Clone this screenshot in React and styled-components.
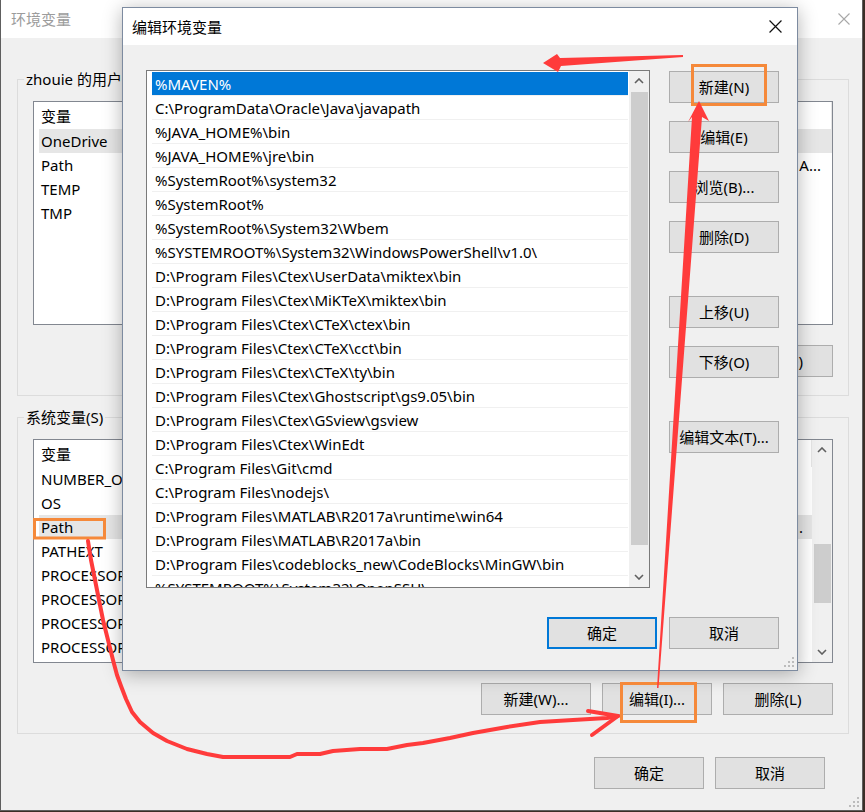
import React from "react";
import styled, { createGlobalStyle } from "styled-components";

const FONT = `"Noto Sans", "Noto Sans CJK SC", sans-serif`;

const GlobalStyle = createGlobalStyle`
  body {
    margin: 0;
    background: #3a2d26;
    font-family: ${FONT};
    font-size: 15px;
    color: #000;
  }
`;

const paths = [
  "%MAVEN%",
  "C:\\ProgramData\\Oracle\\Java\\javapath",
  "%JAVA_HOME%\\bin",
  "%JAVA_HOME%\\jre\\bin",
  "%SystemRoot%\\system32",
  "%SystemRoot%",
  "%SystemRoot%\\System32\\Wbem",
  "%SYSTEMROOT%\\System32\\WindowsPowerShell\\v1.0\\",
  "D:\\Program Files\\Ctex\\UserData\\miktex\\bin",
  "D:\\Program Files\\Ctex\\MiKTeX\\miktex\\bin",
  "D:\\Program Files\\Ctex\\CTeX\\ctex\\bin",
  "D:\\Program Files\\Ctex\\CTeX\\cct\\bin",
  "D:\\Program Files\\Ctex\\CTeX\\ty\\bin",
  "D:\\Program Files\\Ctex\\Ghostscript\\gs9.05\\bin",
  "D:\\Program Files\\Ctex\\GSview\\gsview",
  "D:\\Program Files\\Ctex\\WinEdt",
  "C:\\Program Files\\Git\\cmd",
  "C:\\Program Files\\nodejs\\",
  "D:\\Program Files\\MATLAB\\R2017a\\runtime\\win64",
  "D:\\Program Files\\MATLAB\\R2017a\\bin",
  "D:\\Program Files\\codeblocks_new\\CodeBlocks\\MinGW\\bin",
  "%SYSTEMROOT%\\System32\\OpenSSH\\",
];

// values are mostly hidden behind the edit dialog; only the tails that peek out are kept
const userVars = [
  { name: "OneDrive", value: "", selected: true },
  { name: "Path", value: "A..." },
  { name: "TEMP", value: "" },
  { name: "TMP", value: "" },
];

const systemVars = [
  { name: "NUMBER_OF_PROCESSORS", value: "" },
  { name: "OS", value: "" },
  { name: "Path", value: ".", selected: true },
  { name: "PATHEXT", value: "" },
  { name: "PROCESSOR_ARCHITECTURE", value: "" },
  { name: "PROCESSOR_IDENTIFIER", value: "" },
  { name: "PROCESSOR_LEVEL", value: "" },
  { name: "PROCESSOR_REVISION", value: "" },
];

function CloseIcon({ color, size }) {
  return (
    <svg width={size} height={size} viewBox="0 0 12 12">
      <path d="M0.5 0.5 L11.5 11.5 M11.5 0.5 L0.5 11.5" stroke={color} strokeWidth="1.1" fill="none" />
    </svg>
  );
}

function Chevron({ up }) {
  return (
    <svg width="10" height="6" viewBox="0 0 10 6">
      <polyline
        points={up ? "1,5 5,1 9,5" : "1,1 5,5 9,1"}
        stroke="#606060"
        strokeWidth="1.6"
        fill="none"
      />
    </svg>
  );
}

function Grip() {
  const dots = [
    [8, 0],
    [8, 4],
    [4, 4],
    [8, 8],
    [4, 8],
    [0, 8],
  ];
  return (
    <GripBox>
      <svg width="10" height="10" viewBox="0 0 10 10">
        {dots.map(([x, y]) => (
          <rect key={`${x}-${y}`} x={x} y={y} width="2" height="2" fill="#bcbcbc" />
        ))}
      </svg>
    </GripBox>
  );
}

function ScrollBar({ offset, size }) {
  return (
    <Scroll>
      <ScrollArrow>
        <Chevron up />
      </ScrollArrow>
      <Track>
        <Thumb $offset={offset} $size={size} />
      </Track>
      <ScrollArrow>
        <Chevron />
      </ScrollArrow>
    </Scroll>
  );
}

function VarList({ rows, scroll, valueEnd }) {
  return (
    <ListBox>
      <ListBody>
        <HeaderRow>
          <NameCell>变量</NameCell>
          <HeaderValue>值</HeaderValue>
        </HeaderRow>
        {rows.map((r) => (
          <VarRow key={r.name} $selected={r.selected}>
            <NameCell>{r.name}</NameCell>
            <ValueCell $end={valueEnd}>{r.value}</ValueCell>
          </VarRow>
        ))}
      </ListBody>
      {scroll && <ScrollBar offset={84} size={59} />}
    </ListBox>
  );
}

function Annotations() {
  const curve = [
    [88, 541], [91, 560], [95, 580], [99, 600], [103, 620], [108, 640], [113, 660],
    [117, 675], [121, 686], [126, 699], [132, 712], [140, 722], [153, 733], [167, 741],
    [187, 749], [207, 754], [223, 757], [290, 757], [297, 754], [320, 754], [333, 751],
    [360, 749], [387, 749], [407, 745], [423, 743], [450, 738], [473, 733], [507, 727],
    [540, 722], [573, 720], [607, 718], [618, 716],
  ]
    .map((p) => p.join(","))
    .join(" ");
  return (
    <Overlay width="865" height="812" viewBox="0 0 865 812">
      <g fill="none" stroke="#f5893a" strokeWidth="3">
        <rect x="34.5" y="519.5" width="70" height="18.5" />
        <rect x="692.5" y="65.5" width="73" height="39" />
        <rect x="621.5" y="683.5" width="74" height="38" />
      </g>
      <g fill="#ff3b3b">
        <polygon points="543,63 557,54 560,58 683,55 683,57 561,66 558,72" />
        <polygon points="699,101 709,121 702,117 658.5,688 657,688 692,117 688,122" />
      </g>
      <g fill="none" stroke="#ff3b3b" strokeWidth="4" strokeLinecap="round" strokeLinejoin="round">
        <polyline points={curve} />
        <polyline points="588,711 618,716 592,735" />
      </g>
    </Overlay>
  );
}

export default function App() {
  return (
    <>
      <GlobalStyle />
      <Desktop>
        <OuterWindow>
          <TitleBar>
            <OuterTitle>环境变量</OuterTitle>
            <CloseIcon color="#a8a8a8" size={12} />
          </TitleBar>
          <OuterBody>
            <Group>
              <Legend>zhouie 的用户变量(U)</Legend>
              <VarList rows={userVars} valueEnd={11} />
              <ButtonRow>
                <Button>新建(N)...</Button>
                <Button>编辑(E)...</Button>
                <Button>删除(D)</Button>
              </ButtonRow>
            </Group>
            <Group>
              <Legend>系统变量(S)</Legend>
              <VarList rows={systemVars} scroll valueEnd={9} />
              <ButtonRow>
                <Button>新建(W)...</Button>
                <Button>编辑(I)...</Button>
                <Button>删除(L)</Button>
              </ButtonRow>
            </Group>
            <OuterFooter>
              <Button>确定</Button>
              <Button>取消</Button>
            </OuterFooter>
          </OuterBody>
          <Grip />
        </OuterWindow>

        <EditDialog>
          <DialogTitleBar>
            <DialogTitle>编辑环境变量</DialogTitle>
            <CloseIcon color="#111" size={13} />
          </DialogTitleBar>
          <DialogBody>
            <MainArea>
              <PathList>
                <PathRows>
                  {paths.map((p, i) => (
                    <PathRow key={p} $selected={i === 0}>
                      {p}
                    </PathRow>
                  ))}
                </PathRows>
                <ScrollBar offset={1} size={453} />
              </PathList>
              <ButtonColumn>
                <ButtonStack>
                  <Button>新建(N)</Button>
                  <Button>编辑(E)</Button>
                  <Button>浏览(B)...</Button>
                  <Button>删除(D)</Button>
                </ButtonStack>
                <ButtonStack>
                  <Button>上移(U)</Button>
                  <Button>下移(O)</Button>
                </ButtonStack>
                <ButtonStack>
                  <Button>编辑文本(T)...</Button>
                </ButtonStack>
              </ButtonColumn>
            </MainArea>
            <DialogFooter>
              <Button $default>确定</Button>
              <Button>取消</Button>
            </DialogFooter>
          </DialogBody>
          <Grip />
        </EditDialog>

        <Annotations />
      </Desktop>
    </>
  );
}

const Desktop = styled.div`
  position: relative;
  width: 865px;
  height: 812px;
  overflow: hidden;
  background: #3a2d26;
`;

const OuterWindow = styled.div`
  position: relative;
  width: 863px;
  height: 811px;
  box-sizing: border-box;
  background: #f0f0f0;
  border: 1px solid #5e5e5e;
  border-top: 0;
  display: flex;
  flex-direction: column;
`;

const TitleBar = styled.div`
  height: 38px;
  flex-shrink: 0;
  background: #fff;
  display: flex;
  align-items: center;
  justify-content: space-between;
  padding: 0 12px 0 10px;
`;

const OuterTitle = styled.span`
  color: #9c9c9c;
  font-size: 15px;
  line-height: 20px;
`;

const OuterBody = styled.div`
  display: flex;
  flex-direction: column;
  padding: 31px 13px 0 16px;
`;

const Group = styled.fieldset`
  margin: 0;
  min-width: 0;
  padding: 12px 15px 18px;
  border: 1px solid #dcdcdc;
  display: flex;
  flex-direction: column;
  gap: 20px;

  & + & {
    margin-top: 11px;
  }
`;

const Legend = styled.legend`
  padding: 0 2px;
  margin-left: -9px;
  font-size: 15px;
  line-height: 20px;
`;

const ListBox = styled.div`
  height: 224px;
  box-sizing: border-box;
  background: #fff;
  border: 1px solid #828790;
  display: flex;
  overflow: hidden;
`;

const ListBody = styled.div`
  flex: 1;
  min-width: 0;
  padding-left: 5px;
  overflow: hidden;
`;

const HeaderRow = styled.div`
  height: 27px;
  display: flex;
  align-items: center;
`;

const NameCell = styled.div`
  width: 210px;
  flex-shrink: 0;
  padding-left: 2px;
  white-space: nowrap;
  overflow: hidden;
  line-height: 20px;
`;

const HeaderValue = styled.div`
  flex: 1;
  align-self: stretch;
  display: flex;
  align-items: center;
  padding-left: 6px;
  border-right: 1px solid #e5e5e5;
`;

const VarRow = styled.div`
  height: 24px;
  display: flex;
  align-items: center;
  background: ${(p) => (p.$selected ? "#e6e6e6" : "transparent")};
`;

const ValueCell = styled.div`
  flex: 1;
  min-width: 0;
  display: flex;
  justify-content: flex-end;
  padding: 0 ${(p) => p.$end}px 0 6px;
  white-space: nowrap;
  overflow: hidden;
  line-height: 20px;
`;

const Scroll = styled.div`
  width: 20px;
  flex-shrink: 0;
  background: #f0f0f0;
  display: flex;
  flex-direction: column;
`;

const ScrollArrow = styled.div`
  height: 20px;
  flex-shrink: 0;
  display: flex;
  align-items: center;
  justify-content: center;
`;

const Track = styled.div`
  flex: 1;
  display: flex;
  flex-direction: column;
`;

const Thumb = styled.div`
  margin: ${(p) => p.$offset}px 1px 0 2px;
  height: ${(p) => p.$size}px;
  background: #cdcdcd;
`;

const ButtonRow = styled.div`
  display: flex;
  justify-content: flex-end;
  gap: 11px;
`;

const OuterFooter = styled.div`
  display: flex;
  justify-content: flex-end;
  gap: 11px;
  margin-top: 23px;
  padding-right: 24px;
`;

const Button = styled.button`
  width: 110px;
  height: 32px;
  flex-shrink: 0;
  box-sizing: border-box;
  padding: 0;
  background: #e1e1e1;
  border: ${(p) => (p.$default ? "2px solid #0078d7" : "1px solid #adadad")};
  font-family: ${FONT};
  font-size: 15px;
  line-height: 20px;
  color: #000;
  white-space: nowrap;
`;

const GripBox = styled.div`
  position: absolute;
  right: 3px;
  bottom: 3px;
  line-height: 0;
`;

const EditDialog = styled.div`
  position: absolute;
  left: 122px;
  top: 7px;
  width: 676px;
  height: 664px;
  box-sizing: border-box;
  background: #f0f0f0;
  border: 1px solid #7d8ba0;
  box-shadow: 0 3px 18px rgba(0, 0, 0, 0.3);
  display: flex;
  flex-direction: column;
`;

const DialogTitleBar = styled.div`
  height: 37px;
  flex-shrink: 0;
  background: #fff;
  display: flex;
  align-items: center;
  justify-content: space-between;
  padding: 0 15px 0 9px;
`;

const DialogTitle = styled.span`
  font-size: 15px;
  line-height: 20px;
`;

const DialogBody = styled.div`
  display: flex;
  flex-direction: column;
  padding: 25px 18px 20px 23px;
`;

const MainArea = styled.div`
  display: flex;
  gap: 19px;
`;

const PathList = styled.div`
  width: 504px;
  height: 518px;
  box-sizing: border-box;
  background: #fff;
  border: 1px solid #7a7a7a;
  display: flex;
  overflow: hidden;
`;

const PathRows = styled.div`
  flex: 1;
  min-width: 0;
  padding: 1px 1px 0 5px;
  overflow: hidden;
`;

const PathRow = styled.div`
  height: 24px;
  box-sizing: border-box;
  border-bottom: 1px solid #f0f0f0;
  padding-left: 3px;
  display: flex;
  align-items: center;
  white-space: nowrap;
  line-height: 20px;
  background: ${(p) => (p.$selected ? "#0078d7" : "transparent")};
  color: ${(p) => (p.$selected ? "#fff" : "#000")};
`;

const ButtonColumn = styled.div`
  display: flex;
  flex-direction: column;
  gap: 43px;
  padding-top: 1px;
`;

const ButtonStack = styled.div`
  display: flex;
  flex-direction: column;
  gap: 18px;
`;

const DialogFooter = styled.div`
  display: flex;
  justify-content: flex-end;
  gap: 12px;
  margin-top: 29px;
`;

const Overlay = styled.svg`
  position: absolute;
  left: 0;
  top: 0;
  pointer-events: none;
`;
